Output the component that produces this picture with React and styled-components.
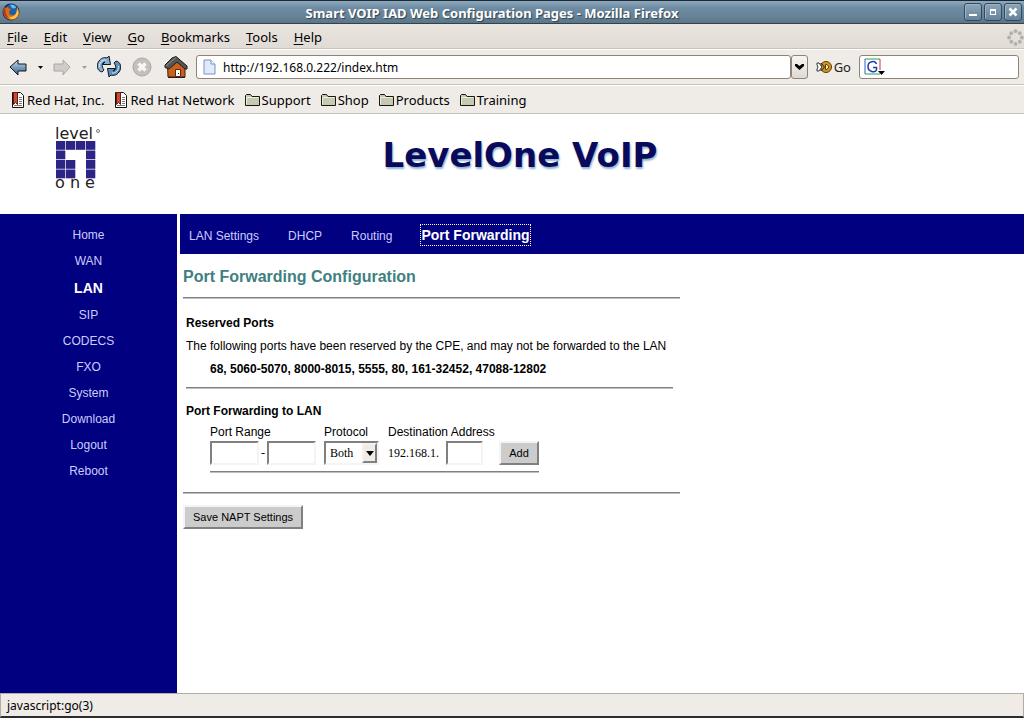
import React, { useState } from "react";
import styled, { createGlobalStyle, css } from "styled-components";

const uiFont = `"Noto Sans", "Open Sans", sans-serif`;
const pageFont = `"Liberation Sans", Arial, sans-serif`;
const fieldFont = `"Liberation Serif", "Times New Roman", serif`;

const GlobalStyle = createGlobalStyle`
  * {
    box-sizing: border-box;
  }
  body {
    margin: 0;
    background-color: #ffffff;
    color: #000000;
    font-family: ${pageFont};
  }
`;

const Window = styled.div`
  display: flex;
  flex-direction: column;
  min-height: 100vh;
`;

const TitleBar = styled.header`
  display: flex;
  align-items: center;
  height: 24px;
  padding: 0 2px;
  border-top: 1px solid #1c2630;
  border-bottom: 1px solid #34424e;
  background: linear-gradient(#8ea9bd, #6d8ca3 30%, #668398 70%, #5b7588);
`;

const WindowTitle = styled.div`
  flex: 1;
  padding-top: 2px;
  text-align: center;
  color: #ffffff;
  font: bold 13px/20px ${uiFont};
  text-shadow: 1px 1px 1px #2d4152;
`;

const WindowButtons = styled.div`
  display: flex;
  gap: 2px;
`;

const WindowButton = styled.button`
  display: flex;
  align-items: center;
  justify-content: center;
  width: 18px;
  height: 18px;
  padding: 0;
  border: 1px solid #34495a;
  border-radius: 3px;
  background: linear-gradient(#8ba6b9, #64839a);
  box-shadow: inset 1px 1px 0 #9db4c5;
`;

const MenuBar = styled.nav`
  display: flex;
  align-items: center;
  gap: 16px;
  height: 25px;
  padding: 2px 0 0 7px;
  border-bottom: 1px solid #c9c2ba;
  background: linear-gradient(#e9e4de, #e1dbd5);
`;

const MenuItem = styled.button`
  padding: 0;
  border: none;
  background: none;
  color: #000000;
  font: 13px/20px ${uiFont};

  &::first-letter {
    text-decoration: underline;
    text-underline-offset: 2px;
  }
`;

const Throbber = styled.svg`
  margin-left: auto;
`;

const Toolbar = styled.div`
  display: flex;
  align-items: center;
  height: 36px;
  padding: 0 5px 0 9px;
  border-top: 1px solid #ffffff;
  border-bottom: 1px solid #c9c2ba;
  background-color: #efebe7;
`;

const ToolButton = styled.button`
  display: flex;
  align-items: center;
  justify-content: center;
  width: ${({ $width }) => $width}px;
  height: 28px;
  padding: 0;
  border: none;
  background: none;
`;

const AddressBox = styled.div`
  display: flex;
  flex: 1;
  align-items: center;
  min-width: 0;
  height: 24px;
  margin-left: 7px;
  padding-left: 6px;
  gap: 7px;
  border: 1px solid #8f8377;
  border-radius: 3px;
  background-color: #ffffff;
`;

const ToolInput = styled.input`
  flex: 1;
  min-width: 0;
  padding: 2px 0 0;
  border: none;
  outline: none;
  background: none;
  font: 12px/20px ${uiFont};
`;

const HistoryButton = styled(ToolButton)`
  height: 24px;
  border: 1px solid #8f8377;
  border-radius: 3px;
  background: linear-gradient(#f7f5f2, #dfd9d3);
`;

const GoButton = styled.button`
  display: flex;
  align-items: center;
  gap: 2px;
  margin: 0 8px;
  padding: 0;
  border: none;
  background: none;
  color: #222222;
  font: 13px/20px ${uiFont};
`;

const SearchBox = styled(AddressBox)`
  flex: 0 0 160px;
  margin-left: 0;
  padding-left: 4px;
`;

const BookmarkBar = styled.nav`
  display: flex;
  align-items: center;
  gap: 10px;
  height: 29px;
  padding: 0 11px;
  border-top: 1px solid #ffffff;
  border-bottom: 1px solid #c9c2ba;
  background-color: #efebe7;
`;

const Bookmark = styled.a`
  display: flex;
  align-items: center;
  gap: 2px;
  color: #000000;
  text-decoration: none;
  font: 13px/20px ${uiFont};
`;

const Banner = styled.div`
  display: flex;
  align-items: flex-start;
  height: 100px;
  padding: 0 92px 0 52px;
  background-color: #ffffff;
`;

const Logo = styled.svg`
  margin-top: 4px;
`;

const BannerTitle = styled.h1`
  flex: 1;
  margin: 21px 0 0;
  text-align: center;
  color: #0a0a5c;
  font: bold 34px/40px "DejaVu Sans", Verdana, sans-serif;
  text-shadow: 1px 2px 2px #8fb4cf;
`;

const Frames = styled.div`
  display: flex;
  flex: 1;
  gap: 3px;
`;

const Sidebar = styled.nav`
  display: flex;
  flex: 0 0 177px;
  flex-direction: column;
  align-items: center;
  padding-top: 8px;
  background-color: #000080;
`;

const FrameLink = styled.a`
  color: #ccccff;
  text-decoration: none;
  font-size: 12px;
  line-height: 26px;

  ${({ $active }) =>
    $active &&
    css`
      color: #ffffff;
      font-weight: bold;
      font-size: 14px;
      line-height: 28px;
    `}
`;

const Main = styled.div`
  flex: 1;
  min-width: 0;
`;

const TabBar = styled.nav`
  display: flex;
  align-items: center;
  gap: 29px;
  height: 40px;
  padding: 4px 9px 0;
  background-color: #000080;
`;

const TabLink = styled(FrameLink)`
  line-height: 20px;
  ${({ $active }) =>
    $active &&
    css`
      margin-bottom: 2px;
      outline: 1px dotted #ffffff;
    `}
`;

const Content = styled.main`
  max-width: 500px;
  padding: 12px 0 12px 3px;
`;

const Heading = styled.h2`
  margin: 0 0 10px;
  color: #408080;
  font-size: 16px;
  line-height: 21px;
`;

const Rule = styled.hr`
  height: 2px;
  margin: 0;
  border: none;
  border-top: 1px solid #808080;
  background-color: #c0c0c0;
`;

const Section = styled.section`
  padding: ${({ $top }) => $top}px 7px 0 3px;
  font-size: 12px;
  line-height: 23px;
`;

const SectionTitle = styled.h3`
  margin: 0;
  font-size: 12px;
  line-height: 24px;
`;

const Text = styled.p`
  margin: 0;
  white-space: nowrap;
`;

const Ports = styled.p`
  margin: 0 0 6px;
  padding-left: 24px;
  font-weight: bold;
`;

const ForwardForm = styled.form`
  display: grid;
  grid-template-columns: 105px 55px 102px 40px;
  column-gap: 9px;
  align-items: center;
  width: fit-content;
  margin: 0 0 19px 24px;
`;

const FieldLabel = styled.label`
  grid-column: ${({ $column }) => $column};
  font-size: 12px;
  line-height: 18px;
  white-space: nowrap;
`;

const Field = styled.div`
  display: flex;
  align-items: center;
  gap: ${({ $gap }) => $gap}px;
  height: 24px;
  font: 12px/20px ${fieldFont};
`;

const TextInput = styled.input`
  width: ${({ $width }) => $width}px;
  height: 24px;
  padding: 0 3px;
  border: 2px solid;
  border-color: #808080 #f4f4f4 #f4f4f4 #808080;
  background-color: #ffffff;
  font: inherit;
`;

const SelectBox = styled.div`
  position: relative;
  width: 55px;
  height: 24px;
`;

const Select = styled.select`
  appearance: none;
  width: 100%;
  height: 100%;
  padding: 0 0 0 4px;
  border: 2px solid;
  border-color: #808080 #f4f4f4 #f4f4f4 #808080;
  border-radius: 0;
  background-color: #ffffff;
  color: #000000;
  font: 12px/20px ${fieldFont};
`;

const SelectArrow = styled.span`
  position: absolute;
  top: 2px;
  right: 2px;
  bottom: 2px;
  display: flex;
  align-items: center;
  justify-content: center;
  width: 15px;
  border: 2px solid;
  border-color: #f4f2ef #808080 #808080 #f4f2ef;
  background-color: #efebe7;
  pointer-events: none;
`;

const Button = styled.button`
  height: 24px;
  padding: 0 ${({ $pad }) => $pad}px;
  border: 2px solid;
  border-color: #f4f4f4 #808080 #808080 #f4f4f4;
  background-color: #cccccc;
  color: #000000;
  font: 11px/20px ${pageFont};
`;

const FormRule = styled(Rule)`
  grid-column: 1 / -1;
  margin-top: 6px;
`;

const SaveRow = styled.div`
  padding-top: 11px;
`;

const StatusBar = styled.footer`
  height: 25px;
  padding: 0 6px;
  border: 1px solid #b5aba1;
  border-bottom: 2px solid #2c2c2c;
  background-color: #efebe7;
  font: 12px/24px ${uiFont};
`;

const FirefoxIcon = () => (
  <svg width="18" height="18" viewBox="0 0 18 18">
    <circle cx="9" cy="9" r="8.5" fill="#1c2436" />
    <circle cx="9.5" cy="7.5" r="6.5" fill="#1f5fa6" />
    <path d="M8 2c3-1 6 0 6 3-1 0-3 1-4 0S9 3 8 2z" fill="#68bbe8" />
    <path
      d="M2 4l1.500 1L6 4c0 1 1 2 3 2L7.500 8C6 11 9 13 12 12c3-1 4-4 3-8 3 4 3 9-1 11.500-4 3-10 1-12-3.500C1 9 1 6 2 4z"
      fill="#e06a17"
    />
    <path d="M15 5c3 5 1 10-4 11-3 0-5-1-6-3 6 3 10-1 10-8z" fill="#ffc642" />
    <path d="M2 5l1.500 1v3c0 3 2 5 5 6-4 0-8-3-6.500-10z" fill="#a93613" />
  </svg>
);

const ArrowIcon = ({ forward }) => (
  <svg width="18" height="18" viewBox="0 0 18 18">
    <defs>
      <linearGradient id="backArrow" x1="0" y1="0" x2="0" y2="1">
        <stop offset="0" stopColor="#c8dcee" />
        <stop offset="1" stopColor="#2f5f8d" />
      </linearGradient>
    </defs>
    <path
      d={forward ? "M17 9L10 2v4H1v7h9v4z" : "M1 9l8-7v4h8v7H9v4z"}
      fill={forward ? "#cfccc9" : "url(#backArrow)"}
      stroke={forward ? "#a9a6a3" : "#101820"}
      strokeLinejoin="round"
    />
  </svg>
);

const CaretIcon = ({ color = "#000000" }) => (
  <svg width="5" height="3" viewBox="0 0 5 3">
    <path d="M0 0h5L2.5 3z" fill={color} />
  </svg>
);

const swoosh = "M5 17C0 16-1 10 2 6c2-3 5-4 8-3l2-2 1.500 8.500H5.500L8 7C5 7 4 11 7 15z";

const ReloadIcon = () => (
  <svg width="24" height="24" viewBox="0 0 24 24">
    {[0, 180].map((angle) => (
      <g key={angle} transform={`rotate(${angle} 12 11.5)`}>
        <path
          d={swoosh}
          fill={angle ? "#5f8fbd" : "#86aed2"}
          stroke="#0d1722"
          strokeLinejoin="round"
        />
        <path d="M2.500 12C2 8 5 4.500 9 5" fill="none" stroke="#d5e6f5" />
      </g>
    ))}
  </svg>
);

const StopIcon = () => (
  <svg width="20" height="20" viewBox="0 0 20 20">
    <circle cx="10" cy="10" r="9" fill="#c3c0bd" stroke="#aaa7a4" />
    <path d="M6.5 6.5l7 7m0-7l-7 7" stroke="#f8f7f5" strokeWidth="3.5" />
  </svg>
);

const HomeIcon = () => (
  <svg width="24" height="24" viewBox="0 0 24 24">
    <path d="M3.500 10L13 3l8 7v12h-17z" fill="#c9601b" stroke="#45200a" />
    <path
      d="M8 3l4-1.500L23 11v3h-2l-8-7-8 7-4-1.500V10z"
      fill="#565656"
      stroke="#1c1c1c"
      strokeLinejoin="round"
    />
    <path d="M2 11l10-8.500" stroke="#8b8b8b" />
    <path d="M11.500 14.500h5v7h-5z" fill="#ffffff" stroke="#552a10" />
    <path d="M14 18h1v1h-1z" fill="#222222" />
    <path d="M4 22.500h17" stroke="#202020" />
  </svg>
);

const PageIcon = () => (
  <svg width="13" height="16" viewBox="0 0 13 16">
    <path d="M1 1h7l4 4v10H1z" fill="#dfeafb" stroke="#7d91ba" />
    <path d="M8 1v4h4" fill="#ffffff" stroke="#7d91ba" />
  </svg>
);

const ChevronIcon = () => (
  <svg width="9" height="6" viewBox="0 0 9 6">
    <path d="M0 0h2l2.500 2L7 0h2v2L4.500 6 0 2z" fill="#000000" />
  </svg>
);

const GoIcon = () => (
  <svg width="16" height="14" viewBox="0 0 16 14">
    <circle cx="10" cy="7" r="5.5" fill="#d9951e" stroke="#573b0c" />
    <path d="M1 3h2l3 4-3 4H1V9l1-2-1-2z" fill="#ffffff" stroke="#333333" />
    <path d="M4.500 3.500h1l3 3.500-3 3.500h-1" fill="none" stroke="#222222" />
    <path d="M9.500 4.500h1.500l2 2.500-2 2.500H9.500z" fill="#ffe8a8" stroke="#573b0c" />
  </svg>
);

const GoogleIcon = () => (
  <svg width="22" height="18" viewBox="0 0 22 18">
    <path d="M1 1h15v15H1z" fill="#ffffff" />
    <path d="M1 16V1" stroke="#2f62c0" />
    <path d="M1 1h15M1 16h15" stroke="#2d9b52" />
    <path d="M16 1v11" stroke="#d53434" />
    <path
      d="M12.500 6C11 2 4 3 4 8.500s7 6.500 8.500 3.500V9.500H9"
      fill="none"
      stroke="#1b3fae"
      strokeWidth="1.500"
    />
    <path d="M14 13h7l-3.500 4z" fill="#000000" />
  </svg>
);

const BookmarkIcon = () => (
  <svg width="14" height="16" viewBox="0 0 14 16">
    <path d="M1.500.5h8l3 3v12h-11z" fill="#ffffff" stroke="#111111" />
    <path d="M8 5.500h3M8 7.500h3M8 9.500h3M8 11.500h3M3 13.500h8" stroke="#777777" />
    <path d="M2.500.5h4v12l-2-2-2 2z" fill="#cf4931" stroke="#641b10" />
  </svg>
);

const FolderIcon = () => (
  <svg width="15" height="14" viewBox="0 0 15 14">
    <path
      d="M.5 12.500v-10l1-1h4l1.500 2h7.500v9z"
      fill="#c6cab2"
      stroke="#15180e"
      strokeLinejoin="round"
    />
    <path d="M1.500 11.500v-7h12" fill="none" stroke="#eef0e2" />
  </svg>
);

const throbberDots = [
  [8, 2],
  [12, 4],
  [14, 8],
  [12, 12],
  [8, 14],
  [4, 12],
  [2, 8],
  [4, 4],
];

const logoTiles = [
  [0, 0],
  [1, 0],
  [2, 0],
  [3, 0],
  [0, 1],
  [3, 1],
  [0, 2],
  [1, 2],
  [3, 2],
  [0, 3],
  [1, 3],
  [3, 3],
];

const menus = ["File", "Edit", "View", "Go", "Bookmarks", "Tools", "Help"];

const bookmarks = [
  { label: "Red Hat, Inc." },
  { label: "Red Hat Network" },
  { label: "Support", folder: true },
  { label: "Shop", folder: true },
  { label: "Products", folder: true },
  { label: "Training", folder: true },
];

const pages = [
  "Home",
  "WAN",
  "LAN",
  "SIP",
  "CODECS",
  "FXO",
  "System",
  "Download",
  "Logout",
  "Reboot",
];

const tabs = ["LAN Settings", "DHCP", "Routing", "Port Forwarding"];

const LevelOneLogo = () => (
  <Logo width="56" height="80" viewBox="0 -8 56 80">
    <g fill="#222222" fontFamily="DejaVu Sans">
      <text x="3" y="13" fontSize="16">
        level
      </text>
      <text x="3" y="62" fontSize="16">
        o n e
      </text>
    </g>
    <circle cx="46" cy="5" r="1.500" fill="none" stroke="#777777" />
    {logoTiles.map(([col, row]) => (
      <rect
        key={`${col}-${row}`}
        x={4 + col * 10}
        y={15 + row * 9.5}
        width="9.3"
        height="8.8"
        fill="#2d2585"
      />
    ))}
  </Logo>
);

const Browser = () => {
  const [address, setAddress] = useState("http://192.168.0.222/index.htm");

  return (
    <>
      <TitleBar>
        <FirefoxIcon />
        <WindowTitle>
          Smart VOIP IAD Web Configuration Pages - Mozilla Firefox
        </WindowTitle>
        <WindowButtons>
          <WindowButton aria-label="Minimize">
            <svg width="10" height="10">
              <path d="M1 7h8v2H1z" fill="#ffffff" />
            </svg>
          </WindowButton>
          <WindowButton aria-label="Maximize">
            <svg width="10" height="10">
              <path d="M2 2h6v6H2zM3 4v3h4V4z" fill="#ffffff" fillRule="evenodd" />
            </svg>
          </WindowButton>
          <WindowButton aria-label="Close">
            <svg width="10" height="10">
              <path d="M1.500 1.500l7 7m0-7l-7 7" stroke="#ffffff" strokeWidth="2.500" />
            </svg>
          </WindowButton>
        </WindowButtons>
      </TitleBar>
      <MenuBar>
        {menus.map((menu) => (
          <MenuItem key={menu}>{menu}</MenuItem>
        ))}
        <Throbber width="17" height="17" viewBox="0 0 16 16">
          {throbberDots.map(([x, y]) => (
            <circle key={`${x}-${y}`} cx={x} cy={y} r="1.800" fill="#b3afab" />
          ))}
        </Throbber>
      </MenuBar>
      <Toolbar>
        <ToolButton $width={18} aria-label="Back">
          <ArrowIcon />
        </ToolButton>
        <ToolButton $width={26} aria-label="Back history">
          <CaretIcon />
        </ToolButton>
        <ToolButton $width={18} aria-label="Forward">
          <ArrowIcon forward />
        </ToolButton>
        <ToolButton $width={26} aria-label="Forward history">
          <CaretIcon color="#a09c98" />
        </ToolButton>
        <ToolButton $width={24} aria-label="Reload">
          <ReloadIcon />
        </ToolButton>
        <ToolButton $width={42} aria-label="Stop">
          <StopIcon />
        </ToolButton>
        <ToolButton $width={26} aria-label="Home">
          <HomeIcon />
        </ToolButton>
        <AddressBox>
          <PageIcon />
          <ToolInput
            aria-label="Address"
            value={address}
            onChange={(e) => setAddress(e.target.value)}
          />
        </AddressBox>
        <HistoryButton $width={17} aria-label="Show history">
          <ChevronIcon />
        </HistoryButton>
        <GoButton>
          <GoIcon />
          Go
        </GoButton>
        <SearchBox>
          <GoogleIcon />
          <ToolInput aria-label="Search" />
        </SearchBox>
      </Toolbar>
      <BookmarkBar>
        {bookmarks.map(({ label, folder }) => (
          <Bookmark key={label} href="#">
            {folder ? <FolderIcon /> : <BookmarkIcon />}
            {label}
          </Bookmark>
        ))}
      </BookmarkBar>
    </>
  );
};

const PortForwarding = () => (
  <Content>
    <Heading>Port Forwarding Configuration</Heading>
    <Rule />
    <Section $top={12}>
      <SectionTitle>Reserved Ports</SectionTitle>
      <Text>
        The following ports have been reserved by the CPE, and may not be
        forwarded to the LAN
      </Text>
      <Ports>68, 5060-5070, 8000-8015, 5555, 80, 161-32452, 47088-12802</Ports>
      <Rule />
    </Section>
    <Section $top={10}>
      <SectionTitle>Port Forwarding to LAN</SectionTitle>
      <ForwardForm onSubmit={(e) => e.preventDefault()}>
        <FieldLabel htmlFor="portStart" $column="1">
          Port Range
        </FieldLabel>
        <FieldLabel htmlFor="protocol" $column="2">
          Protocol
        </FieldLabel>
        <FieldLabel htmlFor="address" $column="3 / 5">
          Destination Address
        </FieldLabel>
        <Field $gap={2}>
          <TextInput id="portStart" $width={49} />
          -
          <TextInput aria-label="Port range end" $width={49} />
        </Field>
        <SelectBox>
          <Select id="protocol" defaultValue="Both">
            <option>Both</option>
            <option>TCP</option>
            <option>UDP</option>
          </Select>
          <SelectArrow>
            <svg width="8" height="5" viewBox="0 0 8 5">
              <path d="M0 0h8L4 5z" fill="#000000" />
            </svg>
          </SelectArrow>
        </SelectBox>
        <Field $gap={7}>
          192.168.1.
          <TextInput id="address" $width={37} />
        </Field>
        <Button $pad={6}>Add</Button>
        <FormRule />
      </ForwardForm>
    </Section>
    <Rule />
    <SaveRow>
      <Button $pad={8}>Save NAPT Settings</Button>
    </SaveRow>
  </Content>
);

export default function App() {
  return (
    <Window>
      <GlobalStyle />
      <Browser />
      <Banner>
        <LevelOneLogo />
        <BannerTitle>LevelOne VoIP</BannerTitle>
      </Banner>
      <Frames>
        <Sidebar>
          {pages.map((page) => (
            <FrameLink key={page} href="#" $active={page === "LAN"}>
              {page}
            </FrameLink>
          ))}
        </Sidebar>
        <Main>
          <TabBar>
            {tabs.map((tab) => (
              <TabLink key={tab} href="#" $active={tab === "Port Forwarding"}>
                {tab}
              </TabLink>
            ))}
          </TabBar>
          <PortForwarding />
        </Main>
      </Frames>
      <StatusBar>javascript:go(3)</StatusBar>
    </Window>
  );
}
